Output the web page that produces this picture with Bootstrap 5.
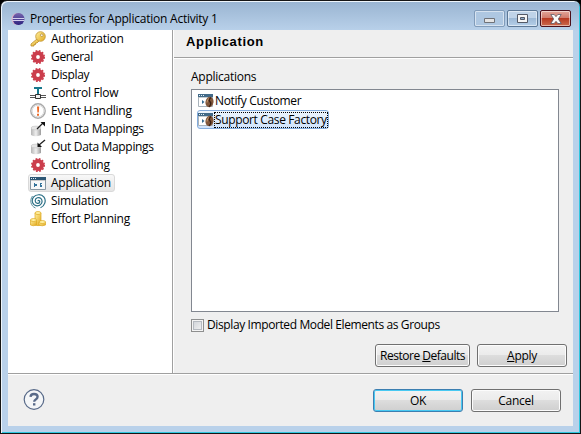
<!DOCTYPE html>
<html lang="en">
<head>
<meta charset="utf-8">
<title>Properties for Application Activity 1</title>
<link href="https://cdn.jsdelivr.net/npm/bootstrap@5.3.0/dist/css/bootstrap.min.css" rel="stylesheet">
<style>
html,body{margin:0;width:581px;height:434px;overflow:hidden;background:#000}
body{font:12px/18px "Open Sans","Noto Sans",sans-serif;color:#000;letter-spacing:-.26px}
svg{display:block;flex:none}
.dialog-frame{width:581px;height:434px;border:1px solid #151515;border-radius:7px 7px 0 0;padding:0 6px 5px 6px;background:linear-gradient(#99b4d1,#b9d1ea 30px);box-shadow:inset 1px 1px #eef5fb,inset -1px -1px #2fc7df}
.title-strip{height:29px;padding:8px 3px 0 4px;gap:2px}
.title-text{line-height:20px;flex:1;margin-left:3px;letter-spacing:-.23px}
.win-btn{width:31px;height:17px;border:1px solid #5d7896;border-radius:2px;box-shadow:inset 0 0 0 1px #ffffff80;background:linear-gradient(#bfd3e8 45%,#9db9d6 50%,#b5cfe9);margin-top:1px;display:flex;align-items:center;justify-content:center}
.win-btn.dim{border-color:#819cba;background:#aec7e1}
.win-btn.shut{border-color:#4c0f1a;background:linear-gradient(#e3a69a,#d17c6d 45%,#b83a22 50%,#cc6a4d)}
.client{width:565px;height:396px;background:#efefef;margin-left:1px}
.upper{height:343px}
.side{width:164px;background:#fff;padding-left:20px}
.side-row{height:18px;width:max-content;padding:0 3px 0 1px;border:1px solid transparent;border-radius:3px;line-height:16px;gap:5px}
.side-row.picked{border-color:#d9d9d9;background:linear-gradient(#f8f8f8,#e5e5e5)}
.side-row.tight{letter-spacing:-.33px}
.pane{border-left:1px solid #a0a0a0;box-shadow:inset 1px 0 #fff;flex:1}
.pane-head{height:28px;border-bottom:1px solid #a0a0a0;box-shadow:0 1px #fff;margin-left:1px;padding:2px 0 0 12px;font:bold 13px/20px "Liberation Sans",Arial,sans-serif;letter-spacing:.65px}
.pane-body{padding:0 6px 0 18px}
.pane-label{margin:10px 0 3px}
.app-list{width:368px;height:223px;border:1px solid #828790;background:#fff;padding:1px 5px;letter-spacing:-.36px}
.app-row{height:19px;width:max-content;border:1px solid transparent;border-radius:3px}
.app-row span{padding:0 1px;line-height:16px}
.app-row.picked{border-color:#84acdd;background:linear-gradient(#eef5fd,#cfe3fc)}
.app-row.picked span{outline:1px dotted #000;outline-offset:-1px}
.option{margin-top:4px;gap:3px;letter-spacing:-.39px}
.tick{width:13px;height:13px;border:1px solid #8e8f8f;box-shadow:inset 0 0 0 1px #f4f4f4,inset 0 0 0 2px #b5bac0;background:linear-gradient(135deg,#cbcfd5,#f6f6f6)}
.actions{gap:7px;margin-top:10px}
.push{width:90px;height:23px;padding:0;border:1px solid #707070;border-radius:3px;color:#000;font-size:12px;letter-spacing:-.3px;line-height:21px;text-align:center;white-space:nowrap;background:linear-gradient(#f2f2f2,#ebebeb 49%,#dddddd 50%,#cfcfcf);box-shadow:inset 0 0 0 1px #fcfcfc}
.push.wide{width:95px;letter-spacing:-.48px}
.push.main{border-color:#3c7fb1;box-shadow:inset 0 0 0 1px #48c9f2}
.foot{height:53px;border-top:1px solid #a0a0a0;box-shadow:inset 0 1px #fff;padding:15px 12px 0 15px}
</style>
<script src="https://cdn.jsdelivr.net/npm/bootstrap@5.3.0/dist/js/bootstrap.bundle.min.js"></script>
</head>
<body>
<svg width="0" height="0" class="position-absolute"><defs>
<linearGradient id="gold" x2="1" y2="1"><stop stop-color="#fff0a0"/><stop offset="1" stop-color="#e2a81c"/></linearGradient>
<linearGradient id="can"><stop stop-color="#b5b5b5"/><stop offset=".5" stop-color="#efefef"/><stop offset="1" stop-color="#9c9c9c"/></linearGradient>
<linearGradient id="orb" x2="0" y2="1"><stop stop-color="#7765ae"/><stop offset="1" stop-color="#2c2380"/></linearGradient>
<linearGradient id="rim" x2="1"><stop stop-color="#e9b3c4"/><stop offset="1" stop-color="#8a70b0"/></linearGradient>
<symbol id="gear" viewBox="0 0 16 16"><circle cx="8" cy="8" r="4" fill="none" stroke="#cb3d4c" stroke-width="4.2"/><circle cx="8" cy="8" r="6.2" fill="none" stroke="#cb3d4c" stroke-width="1.6" stroke-dasharray="1.8 1.45"/></symbol>
<symbol id="drum" viewBox="0 0 16 16"><path d="M1 7v7q4 2.4 10 0V7" fill="url(#can)"/><ellipse cx="6" cy="7" rx="5" ry="1.9" fill="#e6e6e6" stroke="#c2c2c2" stroke-width=".6"/></symbol>
<symbol id="javaapp" viewBox="0 0 16 16"><path d="M.5 1.5h14v12H.5z" fill="#fff" stroke="#a9b3bb"/><path d="M0 1h15v3H0z" fill="#426a88"/><path d="M1 2h1v1H1zM3 2h1v1H3zM5 2h1v1H5z" fill="#e4f0f6"/><path d="M1 4.5h13" stroke="#c5ccd1"/><path d="M4 7l2.5 2L4 11z" fill="#356a90"/><ellipse cx="11.500" cy="9" rx="4" ry="5.200" transform="rotate(12 11.500 9)" fill="#80563a"/><path d="M13.300 4.500q-3.300 2-1.300 4.200t-1 5" fill="none" stroke="#3a2014" stroke-width="1.300"/><path d="M9 9.500q0-3.300 2-4" fill="none" stroke="#c79c72"/></symbol>
</defs></svg>
<div class="dialog-frame">
 <header class="title-strip d-flex align-items-start">
  <svg class="mt-1" width="14" height="14" viewBox="0 0 14 14"><circle cx="6.500" cy="6" r="6" fill="url(#rim)"/><circle cx="7.600" cy="6" r="5.900" fill="url(#orb)"/><path d="M1.300 5.500h12M1.300 7.500h12" stroke="#d5d1ee"/></svg>
  <div class="title-text">Properties for Application Activity 1</div>
  <div class="win-btn dim"><svg class="mt-1" width="11" height="5"><path d="M.5.5h10v4H.5z" fill="#e4e4e4" stroke="#6f7278"/></svg></div>
  <div class="win-btn"><svg width="11" height="9"><path d="M.5.5h10v8H.5z" fill="#f5f5f5" stroke="#535966"/><path d="M3.500 3.500h4v2h-4z" fill="#8fabc9" stroke="#535966"/></svg></div>
  <div class="win-btn shut"><svg width="12" height="10" viewBox="0 0 12 10"><path d="M.8.5h3.400L6 2.700 7.800.5h3.400L8.300 5l2.900 4.500H7.800L6 7.300 4.200 9.500H.8L3.700 5z" fill="#fafafa" stroke="#4f5060" stroke-width=".7"/></svg></div>
 </header>
 <main class="client">
  <div class="upper d-flex">
   <nav class="side">
    <div class="side-row d-flex align-items-center"><svg width="16" height="16"><path d="M7.500 7.500L1 13v2h3v-1.500h1.500V12H7l2.500-2.500" fill="url(#gold)" stroke="#b98c2a" stroke-width=".8"/><circle cx="10.500" cy="5.500" r="4.800" fill="url(#gold)" stroke="#c09432" stroke-width=".8"/><circle cx="11.800" cy="4.200" r="1.300" fill="#fff" stroke="#a97c21" stroke-width=".7"/></svg><span>Authorization</span></div>
    <div class="side-row tight d-flex align-items-center"><svg width="16" height="16"><use href="#gear"/></svg><span>General</span></div>
    <div class="side-row tight d-flex align-items-center"><svg width="16" height="16"><use href="#gear"/></svg><span>Display</span></div>
    <div class="side-row d-flex align-items-center"><svg width="16" height="16"><path d="M4 2h8v2H9v5H7V4H4z" fill="#17788d"/><path d="M0 10.500h16M0 12.500h16" stroke="#555"/><path d="M5.500 9.500h5v4h-5z" fill="#eee" stroke="#333"/></svg><span>Control Flow</span></div>
    <div class="side-row d-flex align-items-center"><svg width="16" height="16"><circle cx="8" cy="8" r="7.200" fill="#fff" stroke="#aaa" stroke-width="1.400"/><circle cx="8" cy="8" r="5.800" fill="none" stroke="#ddd"/><path d="M7 3.500h2.200L8.800 9.500H7.400zM7 10.700h2v2H7z" fill="#ed6a26"/></svg><span>Event Handling</span></div>
    <div class="side-row tight d-flex align-items-center"><svg width="16" height="16"><use href="#drum"/><path d="M7 8l6-6" stroke="#222" stroke-width="1.300"/><path d="M10.500 1H15v4.500z" fill="#111"/></svg><span>In Data Mappings</span></div>
    <div class="side-row tight d-flex align-items-center"><svg width="16" height="16"><use href="#drum"/><path d="M9 6l6-5" stroke="#222" stroke-width="1.300"/><path d="M7.500 3.500V8H12z" fill="#111"/></svg><span>Out Data Mappings</span></div>
    <div class="side-row d-flex align-items-center"><svg width="16" height="16"><use href="#gear"/></svg><span>Controlling</span></div>
    <div class="side-row picked d-flex align-items-center"><svg width="16" height="16"><path d="M.5 2.500h15v12H.5z" fill="#f6f8f9" stroke="#8898a3"/><path d="M0 2h16v3H0z" fill="#2d5775"/><path d="M1 3h1v1H1zM3 3h1v1H3zM5 3h1v1H5z" fill="#dcebf2"/><path d="M1 5.500h14" stroke="#c9c9c9"/><path d="M4 8h1v1h2v2H5v1H4zM10 8h2v1h-1v1h1v2h-2z" fill="#35749b"/></svg><span>Application</span></div>
    <div class="side-row d-flex align-items-center"><svg width="16" height="16"><path d="M8 8.200c0-1.300 2-.8 1.700.8C9.200 11 5.500 11 5.200 8 5 4.700 9 3.500 11 5.700c2.500 3 0 7.300-4 7.100C2.500 12.500 1 7.500 3.500 4.200 6 1 11.500.8 14 4.200c2.500 3.500.8 8.700-3.500 10.500" fill="none" stroke="#2c7086" stroke-width="1.200"/><path d="M2.500 3C-.5 7 .5 13 5.500 15" fill="none" stroke="#578e9e"/></svg><span>Simulation</span></div>
    <div class="side-row d-flex align-items-center"><svg width="16" height="16" fill="url(#gold)" stroke="#dda820" stroke-width=".7"><path d="M5 2v12q3 1.300 6 0V2z"/><ellipse cx="8" cy="2" rx="3" ry="1.500" fill="#fff0a0"/><path d="M.5 9v5q2.500 1.500 6 0V9z"/><ellipse cx="3.500" cy="9" rx="3" ry="1.500" fill="#fff0a0"/><path d="M9 11v3q3 1.600 6.500 0v-3z"/><ellipse cx="12.300" cy="11" rx="3.200" ry="1.500" fill="#fff0a0"/></svg><span>Effort Planning</span></div>
   </nav>
   <section class="pane">
    <div class="pane-head">Application</div>
    <div class="pane-body">
     <div class="pane-label">Applications</div>
     <div class="app-list">
      <div class="app-row d-flex align-items-center"><svg width="16" height="16"><use href="#javaapp"/></svg><span>Notify Customer</span></div>
      <div class="app-row picked d-flex align-items-center"><svg width="16" height="16"><use href="#javaapp"/></svg><span>Support Case Factory</span></div>
     </div>
     <div class="option d-flex align-items-center"><div class="tick"></div><span>Display Imported Model Elements as Groups</span></div>
     <div class="actions d-flex justify-content-end"><button class="btn push wide">Restore <u>D</u>efaults</button><button class="btn push"><u>A</u>pply</button></div>
    </div>
   </section>
  </div>
  <footer class="foot d-flex align-items-start">
   <svg class="me-auto" width="22" height="22" viewBox="0 0 22 22"><circle cx="11" cy="10.500" r="9.800" fill="#f4f6f8" stroke="#586a89" stroke-width="1.200"/><path d="M7.500 7.800Q7.700 5 11 5q3.600 0 3.600 2.800 0 1.500-1.800 2.600Q11.200 11.500 11.200 12.700" fill="none" stroke="#586a89" stroke-width="2.300"/><path d="M10 14.200h2.400v2.300H10z" fill="#586a89"/></svg>
   <div class="d-flex gap-2"><button class="btn push main">OK</button><button class="btn push">Cancel</button></div>
  </footer>
 </main>
</div>
</body>
</html>
